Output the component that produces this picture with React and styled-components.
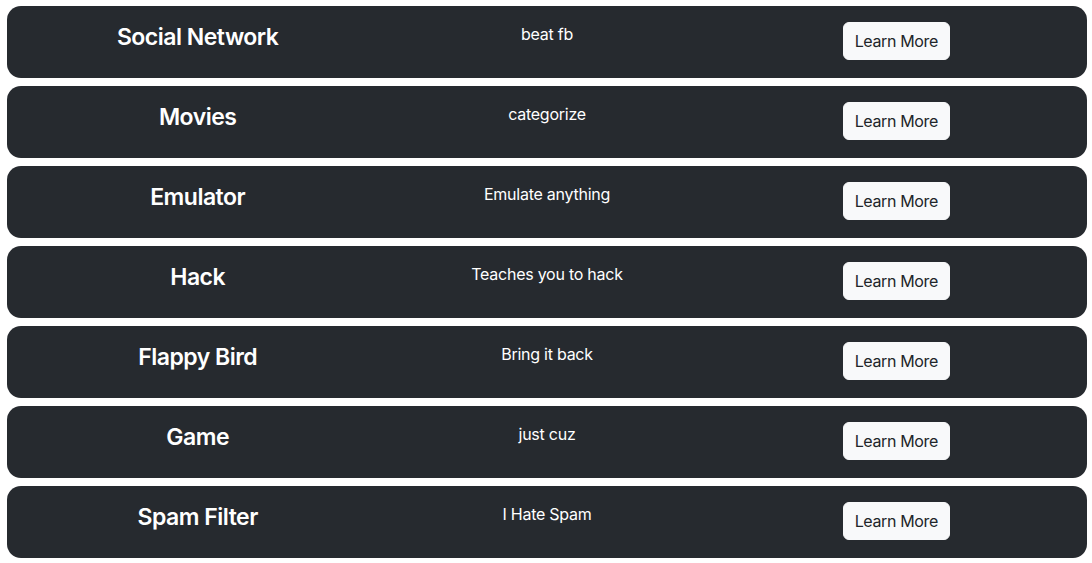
import React from "react";
import styled, { createGlobalStyle } from "styled-components";

const GlobalStyle = createGlobalStyle`
  body {
    margin: 0;
    background: #fff;
    font-family: Inter, "Liberation Sans", sans-serif;
  }
`;

const Wrapper = styled.div`
  display: flex;
  flex-direction: column;
  gap: 8px;
  padding: 6px 5px 6px 7px;
`;

const Card = styled.div`
  display: grid;
  grid-template-columns: repeat(3, 1fr);
  align-items: start;
  background: #262a2f;
  color: #fff;
  border-radius: 14px;
  padding: 16px 16px 18px;
  text-align: center;
`;

const Title = styled.h3`
  margin: 0;
  font-size: 23px;
  font-weight: 600;
  line-height: 30px;
  letter-spacing: -0.5px;
`;

const Text = styled.p`
  margin: 0;
  font-size: 16px;
  line-height: 24px;
  letter-spacing: -0.25px;
`;

const Button = styled.button`
  justify-self: center;
  height: 38px;
  padding: 0 11px;
  background: #f8f9fa;
  color: #212529;
  border: 1px solid #f8f9fa;
  border-radius: 6px;
  font-family: inherit;
  font-size: 16px;
  letter-spacing: -0.35px;
  cursor: pointer;
`;

const projects = [
  { id: 1, name: "Social Network", desc: "beat fb" },
  { id: 2, name: "Movies", desc: "categorize" },
  { id: 3, name: "Emulator", desc: "Emulate anything" },
  { id: 4, name: "Hack", desc: "Teaches you to hack" },
  { id: 5, name: "Flappy Bird", desc: "Bring it back" },
  { id: 6, name: "Game", desc: "just cuz" },
  { id: 7, name: "Spam Filter", desc: "I Hate Spam" },
];

const App = () => {
  const list = projects.map((p) => (
    <Card key={p.id}>
      <Title>{p.name}</Title>
      <Text>{p.desc}</Text>
      <Button>Learn More</Button>
    </Card>
  ));

  return (
    <>
      <GlobalStyle />
      <Wrapper>{list}</Wrapper>
    </>
  );
};

export default App;
